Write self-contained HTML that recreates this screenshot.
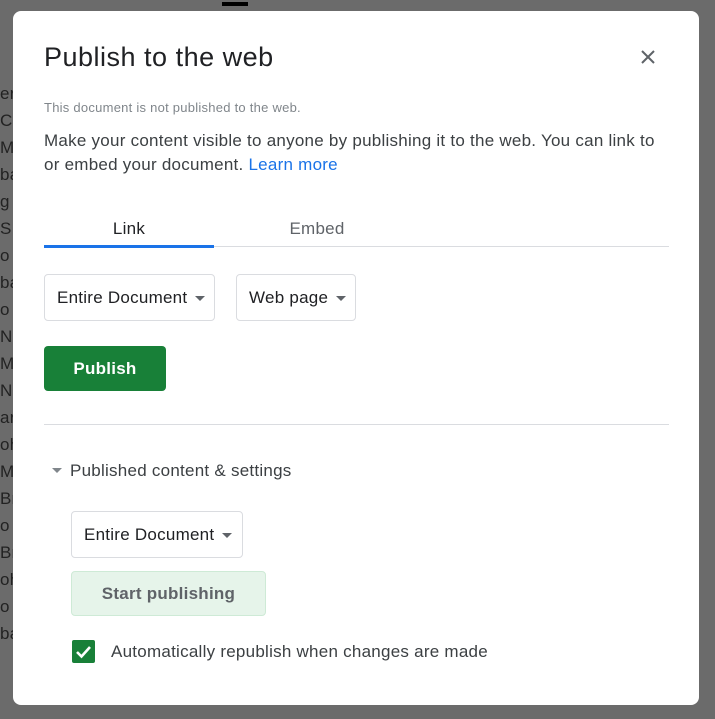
<!DOCTYPE html>
<html><head><style>
body{margin:0;width:715px;height:719px;background:#6b6b6b;position:relative;overflow:hidden;font-family:"Liberation Sans",Arial,sans-serif;letter-spacing:0.25px;}
.dlg{position:absolute;left:13px;top:11px;width:686px;height:694px;background:#fff;border-radius:8px;}
.a{position:absolute;white-space:nowrap;}
.sel{position:absolute;border:1px solid #dadce0;border-radius:4px;height:45px;box-sizing:border-box;font-size:17px;color:#202124;line-height:45px;padding-left:12px;}
.car{display:inline-block;width:0;height:0;border-left:5px solid transparent;border-right:5px solid transparent;border-top:5px solid #5f6368;vertical-align:middle;margin-left:8px;}
</style></head><body>
<div class="a" style="left:222px;top:2px;width:26px;height:4px;background:#000"></div>
<div class="a" style="left:0;top:80px;color:#222;font-size:17px;line-height:27px">er<br>C<br>M<br>ba<br>g<br>S<br>o<br>ba<br>o<br>No<br>M<br>No<br>ar<br>oh<br>M<br>Br<br>o<br>Br<br>oh<br>o<br>ba</div>
<div class="dlg">
<div class="a" style="left:31px;top:31px;font-size:27px;color:#202124;letter-spacing:0.5px">Publish to the web</div>
<svg class="a" style="left:627px;top:38px" width="16" height="16"><path d="M2 2L14 14M14 2L2 14" stroke="#5f6368" stroke-width="2"/></svg>
<div class="a" style="left:31px;top:89px;font-size:13px;color:#80868b">This document is not published to the web.</div>
<div class="a" style="left:31px;top:118px;font-size:17px;line-height:24px;color:#3c4043">Make your content visible to anyone by publishing it to the web. You can link to<br>or embed your document. <span style="color:#1a73e8">Learn more</span></div>
<div class="a" style="left:31px;top:208px;width:170px;text-align:center;font-size:17px;color:#202124">Link</div>
<div class="a" style="left:201px;top:208px;width:206px;text-align:center;font-size:17px;color:#5f6368">Embed</div>
<div class="a" style="left:31px;top:235px;width:625px;height:1px;background:#dadce0"></div>
<div class="a" style="left:31px;top:234px;width:170px;height:3px;background:#1a73e8"></div>
<div class="sel" style="left:31px;top:263px;width:171px;height:47px;line-height:45px">Entire Document<span class="car"></span></div>
<div class="sel" style="left:223px;top:263px;width:120px;height:47px;line-height:45px">Web page<span class="car"></span></div>
<div class="a" style="left:31px;top:335px;width:122px;height:45px;background:#188038;border-radius:4px;color:#fff;font-weight:bold;font-size:17px;line-height:45px;text-align:center">Publish</div>
<div class="a" style="left:31px;top:413px;width:625px;height:1px;background:#dadce0"></div>
<div class="a" style="left:39px;top:457px;width:0;height:0;border-left:5px solid transparent;border-right:5px solid transparent;border-top:5px solid #80868b"></div>
<div class="a" style="left:57px;top:450px;font-size:17px;color:#3c4043">Published content &amp; settings</div>
<div class="sel" style="left:58px;top:500px;width:172px;height:47px;line-height:45px">Entire Document<span class="car"></span></div>
<div class="a" style="left:58px;top:560px;width:195px;height:45px;box-sizing:border-box;background:#e6f4ea;border:1px solid #ceead6;border-radius:4px;color:#5f6368;font-weight:bold;font-size:17px;line-height:43px;text-align:center">Start publishing</div>
<div class="a" style="left:59px;top:629px;width:23px;height:23px;background:#188038;border-radius:2px"><svg width="23" height="23"><path d="M5 12L9.5 16.5L18 7" stroke="#fff" stroke-width="2.6" fill="none"/></svg></div>
<div class="a" style="left:98px;top:631px;font-size:17px;color:#3c4043">Automatically republish when changes are made</div>
</div>
</body></html>
